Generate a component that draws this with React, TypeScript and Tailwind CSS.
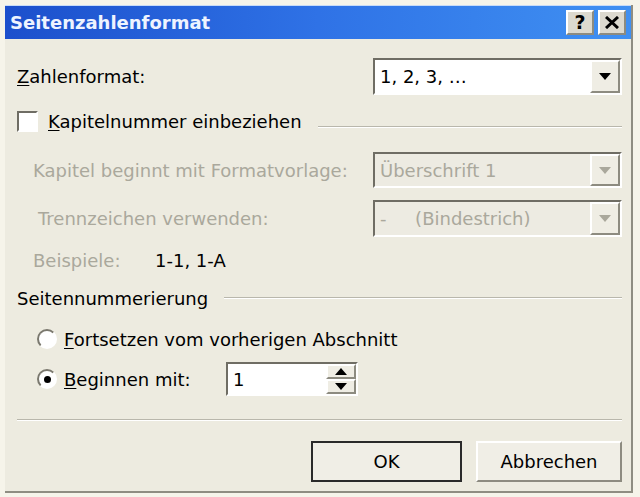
import React from "react";

const font = { fontFamily: '"DejaVu Sans", Tahoma, sans-serif' };

// sunken 3d border like the old win32 controls
const sunken = "border-2 border-t-[#6f6d64] border-l-[#6f6d64] border-b-white border-r-white";
const raised = "border-2 border-t-white border-l-white border-b-[#8d8b80] border-r-[#8d8b80]";

const Arrow = ({ up = false, color = "#000" }: { up?: boolean; color?: string }) => (
  <svg width="12" height="7" viewBox="0 0 12 7">
    <path d={up ? "M0 7 L6 0 L12 7 Z" : "M0 0 L12 0 L6 7 Z"} fill={color} />
  </svg>
);

const Combo = ({ value, disabled = false }: { value: string; disabled?: boolean }) => (
  <div
    className={`w-[249px] h-full flex items-center ${sunken} ${
      disabled ? "bg-[#edebe2] text-[#aaa89c]" : "bg-white text-black"
    }`}
  >
    <span className="flex-1 pl-[5px] whitespace-pre">{value}</span>
    <div className={`w-[30px] h-full flex items-center justify-center bg-[#efede4] ${raised}`}>
      <Arrow color={disabled ? "#aaa89c" : "#000"} />
    </div>
  </div>
);

const Underlined = ({ first, rest }: { first: string; rest: string }) => (
  <span>
    <span className="underline underline-offset-2">{first}</span>
    {rest}
  </span>
);

const Button = ({ label, main = false }: { label: string; main?: boolean }) => (
  <div
    className={`h-[41px] flex items-center justify-center bg-[#f0eee6] ${
      main ? "w-[151px] border-2 border-[#2a2a2a]" : "w-[146px] " + raised
    }`}
  >
    {label}
  </div>
);

export default function App() {
  return (
    <div
      className="w-[640px] h-[497px] bg-[#f6f4ea] pl-[5px] pt-[5px] pr-[7px] pb-[4px] text-[18px] text-black"
      style={font}
    >
      <div className="w-full h-full flex flex-col border-r-2 border-b-2 border-[#8f8d82]">
        {/* Title bar */}
        <div className="h-[34px] flex items-center px-[5px] bg-gradient-to-r from-[#1c4fcc] via-[#2f72e6] to-[#4090f2] border-t border-[#c9dcf7]">
          <span className="flex-1 font-bold text-[18px] text-[#eef4ff]">Seitenzahlenformat</span>
          <div className="flex gap-[4px]">
            <div className={`w-[28px] h-[25px] flex items-center justify-center bg-[#dcd9cf] font-bold text-[19px] ${raised}`}>
              ?
            </div>
            <div className={`w-[28px] h-[25px] flex items-center justify-center bg-[#dcd9cf] ${raised}`}>
              <svg width="14" height="13" viewBox="0 0 14 13">
                <path d="M1 1 L13 12 M13 1 L1 12" stroke="#000" strokeWidth="3" />
              </svg>
            </div>
          </div>
        </div>

        {/* Body */}
        <div className="flex-1 bg-[#edebe0] flex flex-col pl-[12px] pr-[9px]">
          {/* Zahlenformat */}
          <div className="mt-[19px] h-[37px] flex items-center justify-between">
            <Underlined first="Z" rest="ahlenformat:" />
            <Combo value="1, 2, 3, …" />
          </div>

          {/* Kapitelnummer */}
          <div className="mt-[15px] h-[22px] flex items-center">
            <div className={`w-[21px] h-[21px] bg-white ${sunken}`} />
            <span className="ml-[10px]">
              <Underlined first="K" rest="apitelnummer einbeziehen" />
            </span>
            <div className="flex-1 ml-[16px] mt-[12px] h-[2px] border-t border-[#b9b7ac] border-b border-b-white" />
          </div>

          <div className="mt-[20px] h-[36px] flex items-center justify-between text-[#aaa89c]">
            <span className="pl-[16px]">Kapitel beginnt mit Formatvorlage:</span>
            <Combo value="Überschrift 1" disabled />
          </div>

          <div className="mt-[12px] h-[37px] flex items-center justify-between text-[#aaa89c]">
            <span className="pl-[21px]">Trennzeichen verwenden:</span>
            <Combo value={"-     (Bindestrich)"} disabled />
          </div>

          <div className="mt-[12px] h-[22px] flex items-center">
            <span className="pl-[16px] w-[138px] text-[#aaa89c]">Beispiele:</span>
            <span>1-1, 1-A</span>
          </div>

          {/* Seitennummerierung */}
          <div className="mt-[16px] h-[22px] flex items-center">
            <span>Seitennummerierung</span>
            <div className="flex-1 ml-[16px] h-[2px] border-t border-[#b9b7ac] border-b border-b-white" />
          </div>

          <div className="mt-[18px] h-[24px] flex items-center pl-[20px]">
            <div className="w-[20px] h-[20px] rounded-full bg-white border-2 border-t-[#7a786e] border-l-[#7a786e] border-b-white border-r-white" />
            <span className="ml-[7px]">
              <Underlined first="F" rest="ortsetzen vom vorherigen Abschnitt" />
            </span>
          </div>

          <div className="mt-[11px] h-[34px] flex items-center pl-[20px]">
            <div className="w-[20px] h-[20px] rounded-full bg-white flex items-center justify-center border-2 border-t-[#7a786e] border-l-[#7a786e] border-b-white border-r-white">
              <div className="w-[7px] h-[7px] rounded-full bg-black" />
            </div>
            <span className="ml-[7px] w-[162px]">
              <Underlined first="B" rest="eginnen mit:" />
            </span>
            <div className={`w-[132px] h-full flex items-center bg-white ${sunken}`}>
              <span className="flex-1 pl-[5px]">1</span>
              <div className="w-[30px] h-full flex flex-col">
                <div className={`flex-1 flex items-center justify-center bg-[#efede4] ${raised}`}>
                  <Arrow up />
                </div>
                <div className={`flex-1 flex items-center justify-center bg-[#efede4] ${raised}`}>
                  <Arrow />
                </div>
              </div>
            </div>
          </div>

          <div className="mt-[23px] h-[2px] border-t border-[#b9b7ac] border-b border-b-white" />

          <div className="mt-[20px] flex justify-end gap-[14px]">
            <Button label="OK" main />
            <Button label="Abbrechen" />
          </div>
        </div>
      </div>
    </div>
  );
}
